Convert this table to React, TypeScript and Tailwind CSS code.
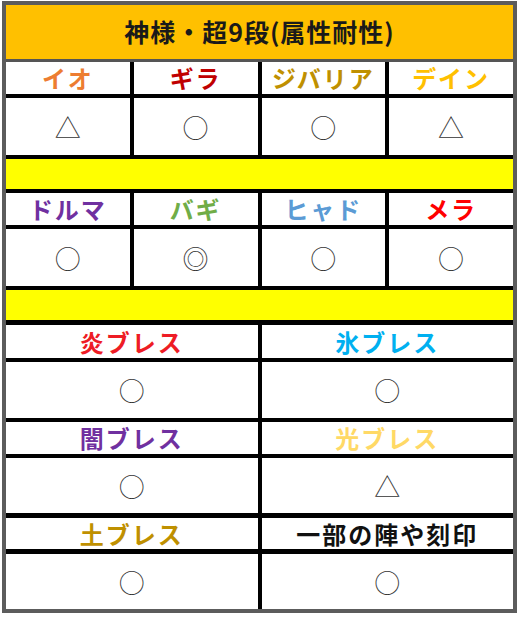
import React from 'react';

type Head = { label: string; color: string };

const jp = { fontFamily: '"Noto Sans CJK JP", "Noto Sans", sans-serif' };

// header cells
const HeadRow: React.FC<{ items: Head[]; cols: 2 | 4; h: string }> = ({ items, cols, h }) => (
  <div className={`grid ${cols === 4 ? 'grid-cols-4' : 'grid-cols-2'} gap-x-[4px] bg-black ${h}`}>
    {items.map((it) => (
      <div
        key={it.label}
        className={`flex items-center justify-center bg-white text-[24px] font-bold tracking-[2px] leading-none ${it.color}`}
      >
        {it.label}
      </div>
    ))}
  </div>
);

// symbol cells
const SymRow: React.FC<{ marks: string[]; cols: 2 | 4; h: string }> = ({ marks, cols, h }) => (
  <div className={`grid ${cols === 4 ? 'grid-cols-4' : 'grid-cols-2'} gap-x-[4px] bg-black ${h}`}>
    {marks.map((m, i) => (
      <div key={i} className="flex items-center justify-center bg-white text-[26px] font-light leading-none text-[#333]">
        {m}
      </div>
    ))}
  </div>
);

const Line = () => <div className="h-[4px] bg-black" />;

export default function App() {
  return (
    <div className="min-h-screen bg-white pl-[2px] pt-[1px]" style={jp}>
      <div className="w-[515px] border-4 border-[#5c5c5c] flex flex-col">
        <div className="h-[57px] bg-[#ffc000] flex items-center justify-center text-[25px] font-bold tracking-[1px] text-[#1a1a1a] border-b-[3px] border-[#555]">
          神様・超9段(属性耐性)
        </div>
        <HeadRow
          cols={4}
          h="h-[32px]"
          items={[
            { label: 'イオ', color: 'text-[#ed7d31]' },
            { label: 'ギラ', color: 'text-[#c00000]' },
            { label: 'ジバリア', color: 'text-[#bf9000]' },
            { label: 'デイン', color: 'text-[#ffc000]' },
          ]}
        />
        <Line />
        <SymRow cols={4} h="h-[57px]" marks={['△', '○', '○', '△']} />
        <Line />
        <div className="h-[30px] bg-[#ffff00]" />
        <Line />
        <HeadRow
          cols={4}
          h="h-[32px]"
          items={[
            { label: 'ドルマ', color: 'text-[#7030a0]' },
            { label: 'バギ', color: 'text-[#70ad47]' },
            { label: 'ヒャド', color: 'text-[#5b9bd5]' },
            { label: 'メラ', color: 'text-[#ff0000]' },
          ]}
        />
        <Line />
        <SymRow cols={4} h="h-[57px]" marks={['○', '◎', '○', '○']} />
        <Line />
        <div className="h-[30px] bg-[#ffff00]" />
        <div className="h-[5px] bg-black" />
        <HeadRow
          cols={2}
          h="h-[33px]"
          items={[
            { label: '炎ブレス', color: 'text-[#ee1c25]' },
            { label: '氷ブレス', color: 'text-[#00b0f0]' },
          ]}
        />
        <Line />
        <SymRow cols={2} h="h-[56px]" marks={['○', '○']} />
        <Line />
        <HeadRow
          cols={2}
          h="h-[32px]"
          items={[
            { label: '闇ブレス', color: 'text-[#7030a0]' },
            { label: '光ブレス', color: 'text-[#ffd966]' },
          ]}
        />
        <Line />
        <SymRow cols={2} h="h-[55px]" marks={['○', '△']} />
        <div className="h-[5px] bg-black" />
        <HeadRow
          cols={2}
          h="h-[31px]"
          items={[
            { label: '土ブレス', color: 'text-[#bf9000]' },
            { label: '一部の陣や刻印', color: 'text-[#111]' },
          ]}
        />
        <div className="h-[5px] bg-black" />
        <SymRow cols={2} h="h-[55px]" marks={['○', '○']} />
      </div>
    </div>
  );
}
